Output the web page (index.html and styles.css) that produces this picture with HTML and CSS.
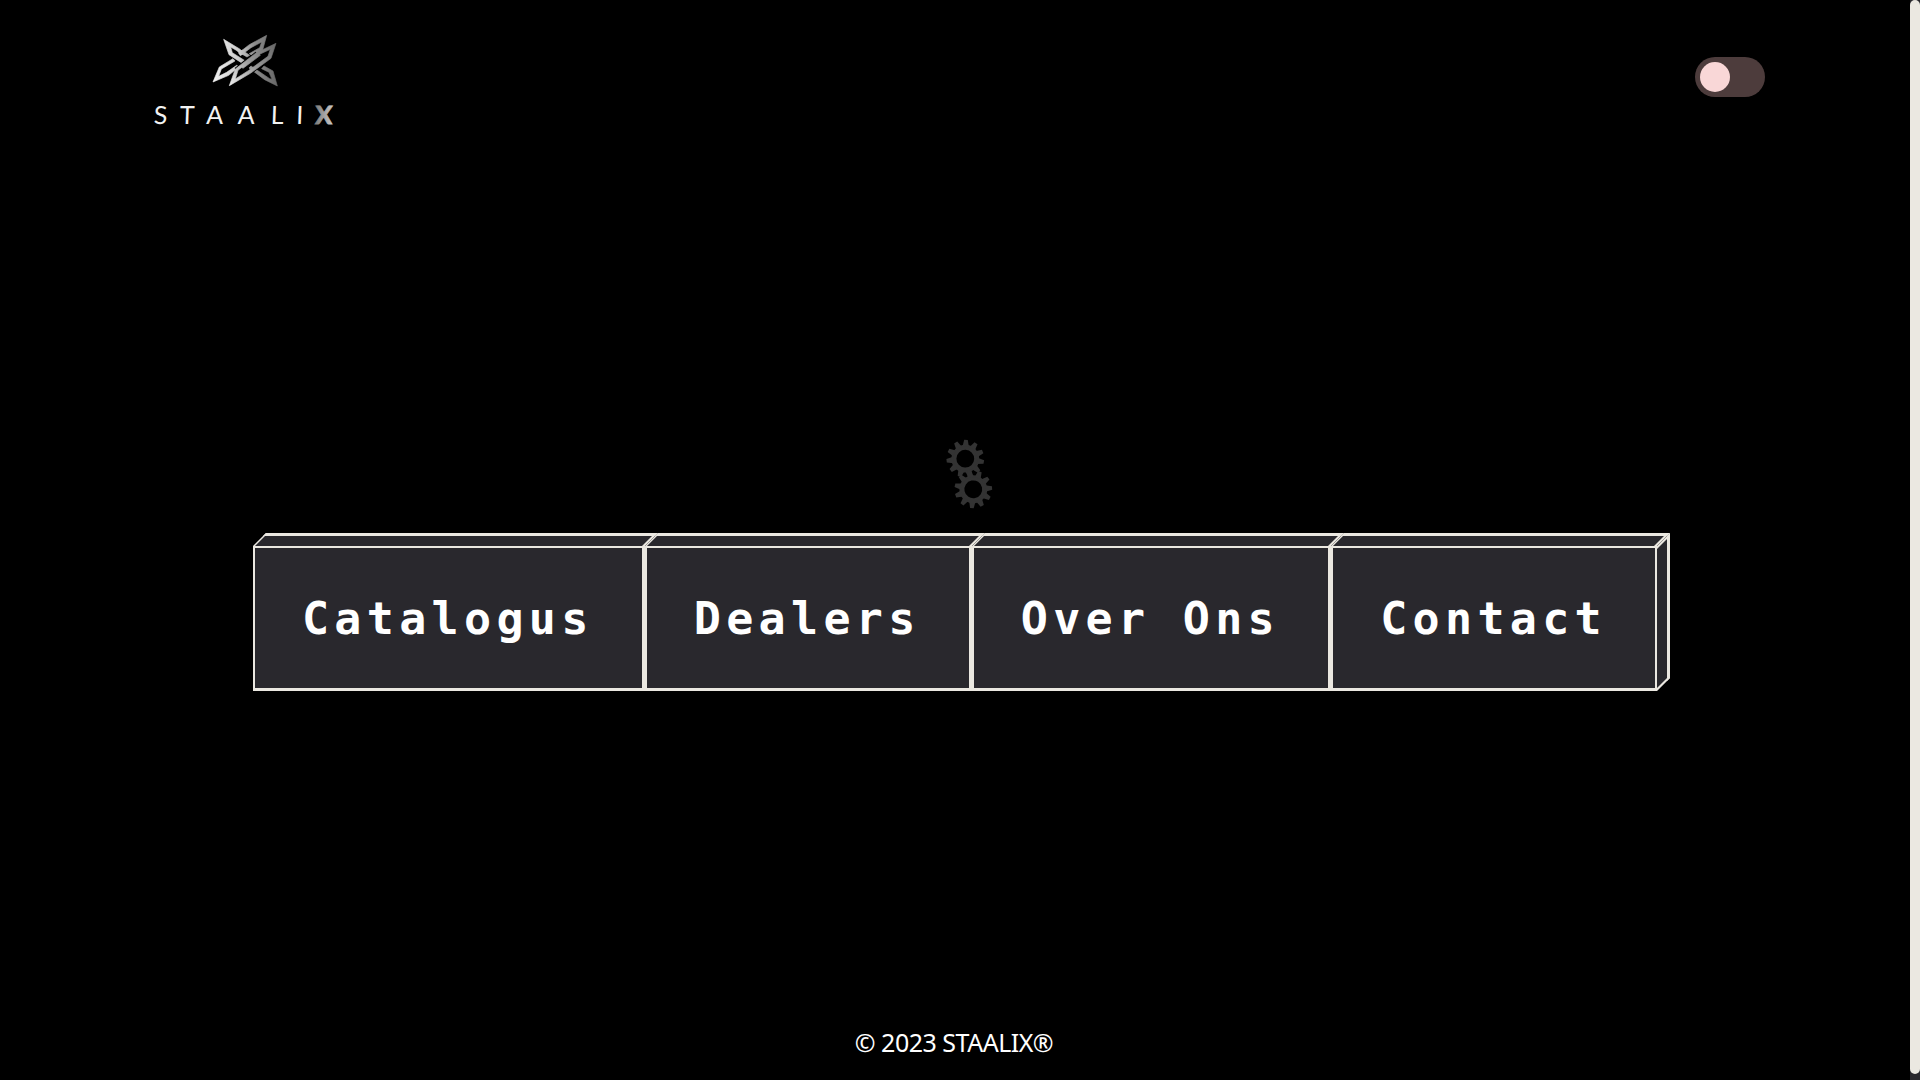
FILE: index.html
```html
<!DOCTYPE html>
<html lang="nl">
<head>
<meta charset="utf-8">
<title>STAALIX</title>
<link rel="stylesheet" href="styles.css">
</head>
<body>
<div class="page">
  <header class="header">
    <svg class="logo" viewBox="0 0 210 110" aria-label="STAALIX">
      <defs>
        <linearGradient id="steel" gradientUnits="userSpaceOnUse" x1="219" y1="0" x2="412" y2="0">
          <stop offset="0" stop-color="#f4f4f4"/><stop offset=".4" stop-color="#ccc"/><stop offset=".65" stop-color="#8c8c8c"/><stop offset="1" stop-color="#666"/>
        </linearGradient>
        <linearGradient id="bar" gradientUnits="userSpaceOnUse" x1="270" y1="195" x2="408" y2="70">
          <stop offset="0" stop-color="#eee"/><stop offset=".5" stop-color="#999"/><stop offset="1" stop-color="#666"/>
        </linearGradient>
        <linearGradient id="metal" x1="0" y1="0" x2="1" y2="0">
          <stop offset="0" stop-color="#777"/><stop offset="1" stop-color="#ccc"/>
        </linearGradient>
      </defs>
      <g transform="scale(.33333)" fill="url(#steel)" stroke="url(#steel)" stroke-width="2" fill-rule="evenodd">
        <path d="M251 58L299 87L313 99L303 105L291 92L272 81L277 98L313 121L304 128L267 104Z"/>
        <path d="M380 46L368 90L338 108L328 101L359 83L365 66L333 83L301 107L296 99L328 74Z"/>
        <path d="M279 116L285 123L244 147L236 169L260 157L290 136L297 140L266 166L219 186L238 141Z"/>
        <path d="M333 138L389 176L396 178L387 157L365 146L372 138L399 153L412 198L374 179L327 144Z"/>
        <path d="M306 90L329 106L321 111L299 98Z"/>
        <g fill="url(#bar)" stroke="url(#bar)">
          <path stroke="#000" stroke-width="7" fill="none" d="M349 98L286 147M393 115L331 160"/>
          <path d="M408 70L393 115L331 160L268 197L286 147L349 98ZM391 88L354 105L294 151L286 177L325 152L384 109Z"/>
          <path d="M302 139L355 99L361 106L309 145Z"/>
        </g>
      </g>
      <g class="logo-text" transform="translate(0 104) skewX(-2)">
        <text x="13.5 39.5 66 97.5 130.5 156">STAALI</text>
        <text class="logo-x" x="175">X</text>
      </g>
    </svg>
    <div class="toggle"><span class="knob"></span></div>
  </header>

  <main class="main">
    <svg class="gears" viewBox="0 0 60 80" aria-hidden="true">
      <defs>
        <path id="tooth" d="M-3.2 -12L-1.8 -18.8H1.8L3.2 -12Z"/>
        <g id="gear" fill="#333">
          <circle r="11.4" fill="none" stroke="#333" stroke-width="5"/>
          <use href="#tooth"/>
          <use href="#tooth" transform="rotate(32.73)"/>
          <use href="#tooth" transform="rotate(65.45)"/>
          <use href="#tooth" transform="rotate(98.18)"/>
          <use href="#tooth" transform="rotate(130.91)"/>
          <use href="#tooth" transform="rotate(163.64)"/>
          <use href="#tooth" transform="rotate(196.36)"/>
          <use href="#tooth" transform="rotate(229.09)"/>
          <use href="#tooth" transform="rotate(261.82)"/>
          <use href="#tooth" transform="rotate(294.55)"/>
          <use href="#tooth" transform="rotate(327.27)"/>
        </g>
      </defs>
      <use href="#gear" transform="translate(25.3 26.7) rotate(2)"/>
      <use href="#gear" transform="translate(33.3 57.3) rotate(-12)"/>
    </svg>
    <nav class="menu">
      <a class="item">Catalogus</a>
      <a class="item">Dealers</a>
      <a class="item">Over Ons</a>
      <a class="item last">Contact</a>
    </nav>
  </main>

  <footer class="footer">© 2023 STAALIX®</footer>
</div>
<div class="scrollbar"><div class="thumb"></div></div>
</body>
</html>
```
FILE: styles.css
```css
*, *::before, *::after { box-sizing: border-box; }
body {
  margin: 0;
  height: 1080px;
  display: flex;
  overflow: hidden;
  background: #000;
  color: #fff;
}
.page {
  flex: 1;
  display: flex;
  flex-direction: column;
}
.header {
  height: 154px;
  padding: 20px 145px 0 140px;
  display: flex;
  justify-content: space-between;
}
.logo { width: 210px; height: 110px; }
.logo-text {
  font: 25px Lato, sans-serif;
  fill: #f2f2f2;
}
.logo-x { font-weight: 900; fill: url(#metal); stroke: url(#metal); stroke-width: .8px; }
.toggle {
  width: 70px;
  height: 40px;
  margin-top: 37px;
  padding: 5px;
  border-radius: 20px;
  background: #4d3c3c;
}
.knob {
  display: block;
  width: 30px;
  height: 30px;
  border-radius: 50%;
  background: #f9d7d7;
}
.main {
  flex: 1;
  display: flex;
  flex-direction: column;
  align-items: center;
  padding-top: 278px;
}
.gears { width: 60px; height: 80px; margin: 0 0 34px 30px; }
.menu { display: flex; }
.item {
  position: relative;
  height: 145px;
  padding: 0 48.1px 0 47.1px;
  border: solid #ebe8e1;
  border-width: 2px 3px 3px 2px;
  background: #29282d;
  font: bold 45px/141px "DejaVu Sans Mono", monospace;
  letter-spacing: 5.31px;
  white-space: pre;
}
.item::before {
  content: "";
  position: absolute;
  left: -2px;
  right: -3px;
  top: -15px;
  height: 13px;
  border: solid #ebe8e1;
  border-width: 3px 3px 0 2px;
  background: #29282d;
  transform: skewX(-45deg);
  transform-origin: 0 100%;
}
.last { border-right-width: 2px; }
.last::before { right: -2px; }
.last::after {
  content: "";
  position: absolute;
  left: 100%;
  margin-left: 2px;
  top: -2px;
  bottom: -3px;
  width: 13px;
  border: solid #ebe8e1;
  border-width: 3px 3px 3px 0;
  background: #29282d;
  transform: skewY(-45deg);
  transform-origin: 0 0;
}
.footer {
  height: 62px;
  padding-right: 2px;
  text-align: center;
  font: 25px/48px "Noto Sans", sans-serif;
  letter-spacing: -.5px;
}
.scrollbar { width: 10px; background: #29282d; }
.thumb { height: 1074px; border-radius: 5px; background: #ebe8e1; }
```
